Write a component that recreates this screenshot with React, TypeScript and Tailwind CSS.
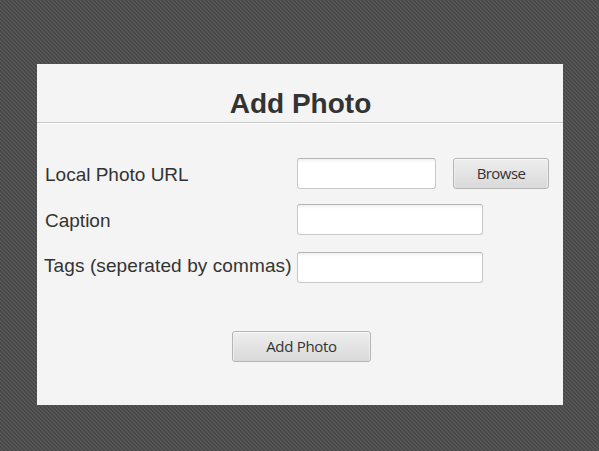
import type { ReactNode } from "react";

const label = "whitespace-nowrap text-[19px] leading-[22px] text-[#333333]";

function Field({ className }: { className: string }) {
  return (
    <input
      type="text"
      className={`block h-[31px] rounded-[3px] border border-[#c8c8c8] border-t-[#b5b5b5] bg-[linear-gradient(#f0f0f0,#ffffff_4px)] px-2 outline-none ${className}`}
    />
  );
}

function Button({ className, children }: { className: string; children: ReactNode }) {
  return (
    <button
      type="button"
      className={`h-[31px] rounded-[3px] border border-[#b5b5b5] bg-[linear-gradient(#eeeeee,#d9d9d9)] font-['Open_Sans',sans-serif] text-[15px] leading-[27px] text-[#333333] shadow-[inset_0_1px_0_#f8f8f8,inset_1px_0_0_#eeeeee,inset_-1px_0_0_#eeeeee] ${className}`}
    >
      {children}
    </button>
  );
}

export default function App() {
  return (
    <main className="h-[451px] w-[599px] bg-[#4d4d4d] bg-[linear-gradient(45deg,#484848_25%,#575757_25%_50%,#484848_50%_75%,#575757_75%)] bg-[length:4px_4px] pl-[37px] pt-[64px] font-['Liberation_Sans',Arial,sans-serif]">
      <section className="h-[341px] w-[526px] bg-[#f4f4f4]">
        <h1 className="flex h-[60px] items-start justify-center border-b border-white pt-[24px] pl-[1px] text-[28px] font-bold leading-[32px] text-[#333333] shadow-[inset_0_-1px_0_#c8c8c8]">
          Add Photo
        </h1>
        <div className="grid grid-cols-[260px_1fr] pt-[34px]">
          <label className={`${label} pl-2 pt-[6px]`}>Local Photo URL</label>
          <div className="flex h-[46px] gap-[17px]">
            <Field className="w-[139px]" />
            <Button className="w-[96px] tracking-[-0.55px]">Browse</Button>
          </div>
          <label className={`${label} pl-2 pt-[6px]`}>Caption</label>
          <div className="h-[48px]">
            <Field className="w-[186px]" />
          </div>
          <label className={`${label} pl-[7px] pt-[3px] tracking-[0.1px]`}>Tags (seperated by commas)</label>
          <div className="h-[79px]">
            <Field className="w-[186px]" />
          </div>
        </div>
        <div className="flex pl-[195px]">
          <Button className="w-[139px] tracking-[-0.3px]">Add Photo</Button>
        </div>
      </section>
    </main>
  );
}
